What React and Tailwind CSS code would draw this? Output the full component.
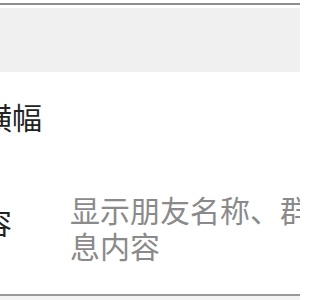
const rows = [
    { label: "通知栏横幅", value: null },
    { label: "通知内容", value: "显示朋友名称、群名称和消息内容" },
];

const App = () => {
    return (
        <div
            className="w-[300px] h-[300px] overflow-hidden bg-white flex flex-col"
            style={{ fontFamily: '"Noto Sans CJK SC", "Noto Sans", sans-serif' }}
        >
            <div className="h-[3px] shrink-0 bg-white"></div>
            <div className="h-[2px] shrink-0 bg-[#8e8e8e]"></div>
            <div className="h-[3px] shrink-0 bg-white"></div>
            <div className="h-[64px] shrink-0 bg-[#f0f0f0]"></div>

            <div className="h-[88px] shrink-0 flex items-center">
                <div className="ml-[-108px] w-[178px] shrink-0 text-[30px] leading-[36px] text-[#222]">
                    {rows[0].label}
                </div>
            </div>

            <div className="h-[134px] shrink-0 flex items-center">
                <div className="ml-[-108px] w-[178px] shrink-0 mb-[12px] text-[30px] leading-[36px] text-[#222]">
                    {rows[1].label}
                </div>
                <p className="w-[362px] shrink-0 text-[30px] leading-[36px] text-[#8a8a8a]">
                    {rows[1].value}
                </p>
            </div>

            <div className="h-[2px] shrink-0 bg-[#9a9a9a]"></div>
            <div className="flex-1 bg-[#f4f4f4]"></div>
        </div>
    );
};

export default App;
